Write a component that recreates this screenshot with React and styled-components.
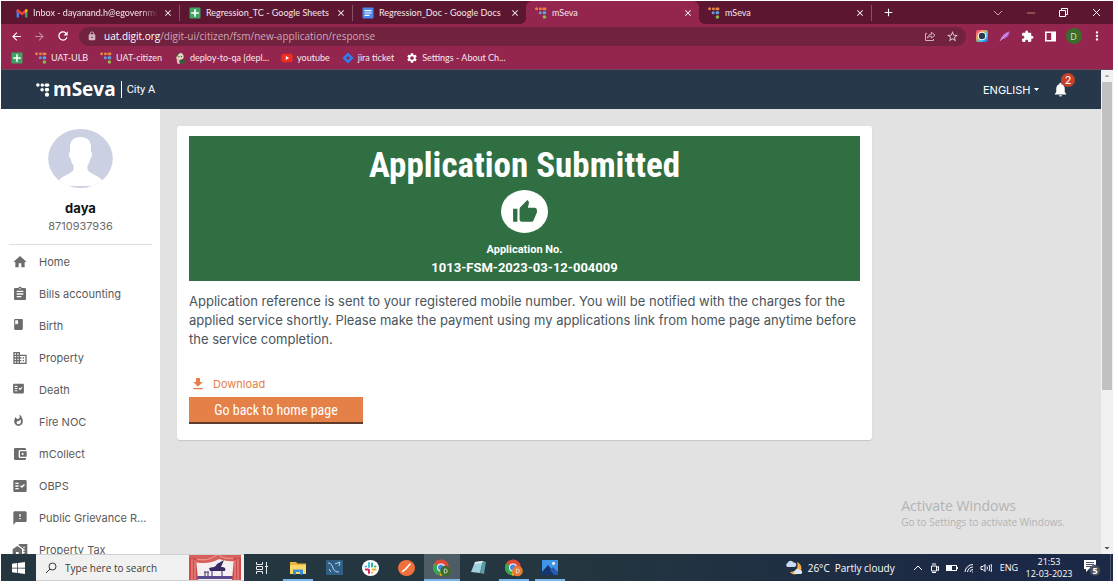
import React from "react";
import styled, { createGlobalStyle, css } from "styled-components";
import {
  MdHome, MdAssignment, MdBook, MdBusiness, MdFactCheck, MdWhatshot,
  MdAccountBalanceWallet, MdFeedback, MdMapsHomeWork, MdThumbUp, MdFileDownload,
  MdNotifications, MdClose, MdAdd, MdArrowBack, MdArrowForward, MdRefresh, MdLock,
  MdStarBorder, MdExtension, MdMoreVert, MdSettings, MdArrowDropDown, MdArrowDropUp,
} from "react-icons/md";

const GlobalStyle = createGlobalStyle`
  *, *::before, *::after { box-sizing: border-box; }
  body { margin: 0; background: #fff; }
  button, input, select { font: inherit; color: inherit; border: 0; padding: 0; margin: 0; background: none; outline: 0; }
  button { cursor: pointer; }
  a { color: inherit; text-decoration: none; }
  svg { display: block; flex: none; }
  h1, p, ul { margin: 0; padding: 0; }
`;

const ui = `"Open Sans", "Noto Sans", sans-serif`;
const chrome = `Lato, "Open Sans", sans-serif`;
const web = `Inter, Roboto, sans-serif`;
const bold = `Roboto, "Liberation Sans", sans-serif`;
const narrow = `"Roboto Condensed", "Liberation Sans Narrow", Roboto, sans-serif`;

const Screen = styled.div`
  display: flex;
  flex-direction: column;
  height: 100vh;
  padding: 1px 5px 3px 1px;
  font-family: ${ui};
`;

/* ---------- browser ---------- */

const TabStrip = styled.div`
  display: flex;
  flex: none;
  height: 23px;
  padding-left: 6px;
  background: #5c1631;
  color: #f3e6ec;
  font: 9px ${chrome};
`;

const Tab = styled.div`
  position: relative;
  display: flex;
  align-items: center;
  flex: 0 1 173px;
  min-width: 0;
  gap: 5px;
  padding: 0 6px 0 9px;
  ${(p) => p.$line && css`border-right: 1px solid #8a5068; border-image: linear-gradient(transparent 20%, #8a5068 20%, #8a5068 84%, transparent 84%) 1;`}
  ${(p) => p.$active && css`
    background: #93254f;
    border-radius: 6px 6px 0 0;
    &::before, &::after {
      content: "";
      position: absolute;
      bottom: 0;
      width: 6px;
      height: 6px;
    }
    &::before { left: -6px; background: radial-gradient(circle at 0 0, transparent 6px, #93254f 6px); }
    &::after { right: -6px; background: radial-gradient(circle at 100% 0, transparent 6px, #93254f 6px); }
  `}
`;

const TabTitle = styled.span`
  flex: 1;
  min-width: 0;
  overflow: hidden;
  white-space: nowrap;
  ${(p) => p.$fade && css`mask-image: linear-gradient(90deg, #000 86%, transparent);`}
`;

const IconButton = styled.button`
  display: grid;
  place-items: center;
  flex: none;
  width: ${(p) => p.$w || 23}px;
`;

const WindowControls = styled.div`
  display: flex;
  margin-left: auto;
`;

const Toolbar = styled.div`
  display: flex;
  align-items: center;
  flex: none;
  height: 24px;
  padding: 0 5px 0 4px;
  background: #93254f;
  color: #fff;
`;

const AddressBar = styled.div`
  display: flex;
  align-items: center;
  flex: 1;
  height: 19px;
  margin: 0 4px 0 5px;
  padding: 0 2px 0 8px;
  border-radius: 10px;
  background: #71223f;
  font-size: 10px;
`;

const Host = styled.label`
  margin-left: 7px;
`;

const PathInput = styled.input`
  flex: 1;
  min-width: 0;
  color: #cda7b5;
`;

const Bookmarks = styled.nav`
  display: flex;
  align-items: center;
  flex: none;
  height: 22px;
  gap: 12px;
  padding: 0 10px 2px;
  border-bottom: 1px solid #6d4560;
  background: #93254f;
  color: #f6e9ee;
  font: 9px ${chrome};
`;

const Bookmark = styled.a`
  display: flex;
  align-items: center;
  gap: 4px;
  white-space: nowrap;
`;

const Avatar = styled.span`
  display: grid;
  place-items: center;
  width: 16px;
  height: 16px;
  border-radius: 50%;
  background: #3c6b2a;
  color: #d5e5cd;
  font-size: 9px;
`;

const Viewport = styled.div`
  display: flex;
  flex: 1;
  min-height: 0;
`;

const Scrollbar = styled.div`
  display: flex;
  flex-direction: column;
  flex: none;
  width: 12px;
  background: #f1f1f1;
  color: #505050;
`;

const ScrollTrack = styled.div`
  flex: 1;
  padding: 0 1px;
`;

const ScrollThumb = styled.div`
  height: 67%;
  background: #c1c1c1;
`;

/* ---------- mSeva page ---------- */

const Page = styled.div`
  display: flex;
  flex-direction: column;
  flex: 1;
  min-width: 0;
  font-family: ${web};
`;

const Header = styled.header`
  display: flex;
  align-items: center;
  flex: none;
  height: 39px;
  padding: 0 32px 0 35px;
  background: #27384a;
  color: #fff;
`;

const Brand = styled.a`
  display: flex;
  align-items: center;
  gap: 3px;
  padding-right: 5px;
  border-right: 1px solid #fff;
  font: 700 19px/17px ${ui};
`;

const City = styled.span`
  margin-left: 5px;
  font: 11px ${bold};
`;

const Language = styled.label`
  display: flex;
  align-items: center;
  gap: 3px;
  margin-left: auto;
  font-size: 11px;
`;

const LanguageSelect = styled.select`
  appearance: none;
`;

const Bell = styled.button`
  position: relative;
  margin-left: 13px;
`;

const Badge = styled.span`
  position: absolute;
  top: -8px;
  right: -6px;
  width: 14px;
  height: 14px;
  border-radius: 50%;
  background: #c8402b;
  font-size: 11px;
  line-height: 14px;
`;

const Body = styled.div`
  display: flex;
  flex: 1;
  min-height: 0;
`;

const Sidebar = styled.aside`
  flex: none;
  width: 159px;
  padding: 20px 8px 0;
  overflow: hidden;
  background: #fff;
`;

const Profile = styled.div`
  display: flex;
  flex-direction: column;
  align-items: center;
  height: 116px;
  border-bottom: 1px solid #dedede;
`;

const UserName = styled.strong`
  margin-top: 11px;
  font-size: 13px;
  line-height: 16px;
  color: #111;
`;

const Phone = styled.span`
  margin-top: 2px;
  font-size: 11px;
  line-height: 16px;
  color: #6b6b6b;
`;

const Menu = styled.nav`
  padding-top: 1px;
`;

const MenuLink = styled.a`
  display: flex;
  align-items: center;
  height: 32px;
  gap: 11px;
  padding-left: 3px;
  color: #5a5a5a;
  font-size: 11px;
  white-space: nowrap;
`;

const MenuIcon = styled.span`
  width: 16px;
  height: 16px;
  color: #6c6c6c;
`;

const Content = styled.main`
  position: relative;
  flex: 1;
  min-width: 0;
  padding: 17px;
  background: #e2e2e2;
`;

const Card = styled.section`
  max-width: 695px;
  padding: 10px 12px 16px;
  border-radius: 3px;
  background: #fff;
  box-shadow: 0 1px 1px #c4c8c8;
`;

const Banner = styled.div`
  display: flex;
  flex-direction: column;
  align-items: center;
  height: 145px;
  padding-top: 12px;
  background: #306f42;
  color: #fff;
  font-family: ${bold};
  font-weight: 700;
`;

const Title = styled.h1`
  font: 700 35px/36px ${narrow};
`;

const Thumb = styled.span`
  display: grid;
  place-items: center;
  width: 47px;
  height: 43px;
  margin: 6px 0 8px;
  border-radius: 50%;
  background: #fff;
  color: #306f42;
`;

const BannerText = styled.span`
  font-size: ${(p) => (p.$large ? 13 : 11)}px;
  line-height: 18px;
`;

const Message = styled.p`
  margin-top: 11px;
  color: #4a555c;
  font-size: 13px;
  line-height: 19px;
`;

const Download = styled.a`
  display: flex;
  align-items: center;
  width: max-content;
  height: 16px;
  gap: 7px;
  margin: 27px 0 5px 1px;
  color: #e58049;
  font-size: 11px;
`;

const HomeButton = styled.button`
  display: block;
  width: 174px;
  height: 27px;
  border-bottom: 2px solid #5f3b2c;
  background: #e58049;
  color: #fff;
  font: 14px ${narrow};
`;

const Watermark = styled.div`
  position: absolute;
  right: 36px;
  bottom: 24px;
  color: #b3b3b3;
  font: 10px/15px ${ui};
`;

const WatermarkTitle = styled.div`
  font-size: 14px;
  line-height: 18px;
`;

/* ---------- desktop taskbar ---------- */

const Taskbar = styled.footer`
  display: flex;
  flex: none;
  height: 27px;
  background: linear-gradient(90deg, #24363f 0%, #24363f 50%, #1b2846 90%);
  color: #fff;
  font-size: 10px;
`;

const SearchBox = styled.label`
  display: flex;
  align-items: center;
  flex: 0 1 208px;
  min-width: 0;
  gap: 8px;
  padding: 0 3px 0 9px;
  border: 1px solid #cfd2d3;
  border-width: 1px 0;
  background: #f1f1f1;
  color: #3b3b3b;
`;

const SearchInput = styled.input`
  flex: 1;
  width: 0;
  min-width: 0;
  &::placeholder { color: #3b3b3b; opacity: 1; }
`;

const TaskButton = styled.button`
  display: grid;
  place-items: center;
  flex: none;
  width: ${(p) => p.$w || 36}px;
  ${(p) => p.$open && css`background: linear-gradient(#78b4ea, #78b4ea) bottom / 30px 2px no-repeat;`}
  ${(p) => p.$active && css`background: linear-gradient(#78b4ea, #78b4ea) bottom / 100% 2px no-repeat, #4e5d65;`}
`;

const Tray = styled.div`
  display: flex;
  align-items: center;
  flex: none;
  margin-left: auto;
  padding-right: 2px;
  white-space: nowrap;
`;

const Weather = styled.button`
  display: flex;
  align-items: center;
  gap: 5px;
  margin-right: 15px;
`;

const TrayIcon = styled.button`
  display: grid;
  place-items: center;
  width: 17px;
`;

const InputLanguage = styled.button`
  margin-left: 5px;
  font-size: 9px;
`;

const Clock = styled.time`
  width: 48px;
  margin-left: 7px;
  text-align: center;
  font-size: 9px;
  line-height: 12px;
`;

const Notices = styled.button`
  display: grid;
  place-items: center;
  width: 38px;
  height: 27px;
  border-right: 1px solid #4a556c;
`;

/* ---------- drawings ---------- */

const DigitMark = ({ size = 12, mono }) => (
  <svg width={size} height={size} viewBox="0 0 12 12">
    <g fill={mono || "#e58442"}>
      <circle cx="1.6" cy="1.8" r="1.5" />
      <rect x="4" y="0.4" width="2.8" height="2.8" rx="1.2" />
      <rect x="7.4" y="0.4" width="4" height="2.8" rx="1.2" />
    </g>
    <g fill={mono || "#5aa0dc"}>
      <circle cx="5.2" cy="5.7" r="1.5" />
      <rect x="7.6" y="4.2" width="3.6" height="3" rx="1.2" />
    </g>
    <circle cx="9.4" cy="10" r="1.8" fill={mono || "#8bbb4a"} />
  </svg>
);

const Gmail = () => (
  <svg width="12" height="12" viewBox="0 0 12 12">
    <path d="M0.6 2.6v8h2.4V5z" fill="#4285f4" />
    <path d="M11.4 2.6v8H9V5z" fill="#34a853" />
    <path d="M0.6 2.8 2 2l4 3.2L10 2l1.4.8v1.8L6 8.4.6 4.6z" fill="#ea4335" />
    <path d="M9 3l1-1 1.4.8v1.8L9 6.2z" fill="#fbbc04" />
  </svg>
);

const Sheets = () => (
  <svg width="12" height="12" viewBox="0 0 12 12">
    <rect x="0.5" y="0.5" width="11" height="11" rx="1" fill="#3fa463" />
    <path d="M5.2 2.2h1.6v3h3v1.6h-3v3H5.2v-3h-3V5.2h3z" fill="#fff" />
  </svg>
);

const Docs = () => (
  <svg width="12" height="12" viewBox="0 0 12 12">
    <rect x="0.5" y="0.5" width="11" height="11" rx="1" fill="#4a87ee" />
    <path d="M2.5 3h7v1.2h-7zM2.5 5.4h7v1.2h-7zM2.5 7.8h5V9h-5z" fill="#fff" />
  </svg>
);

const Jenkins = () => (
  <svg width="12" height="12" viewBox="0 0 12 12">
    <path d="M2 4.5C2 1.8 4 .6 6 .8s4 1.8 3.6 4.6L8.8 8 5 9.4 2.6 7z" fill="#e6d3b8" />
    <path d="M2 4.5C1.6 1.6 4 .2 6.6.7 4.8 1.8 3.2 2.6 3.2 5z" fill="#4a3a35" />
    <path d="M5 8.6 9.6 6.6l1.8 3.4-1.2 1.8H6z" fill="#3e5a3a" />
    <path d="M2.5 7.6 5.4 9.6 6 11.8H3.6z" fill="#d9d2c8" />
    <circle cx="5" cy="4.6" r="0.6" fill="#333" />
    <circle cx="7.4" cy="4.6" r="0.6" fill="#333" />
  </svg>
);

const Youtube = () => (
  <svg width="12" height="12" viewBox="0 0 12 12">
    <rect x="0.3" y="1.8" width="11.4" height="8.4" rx="2.4" fill="#ee2c20" />
    <path d="M4.8 4v4L8.2 6z" fill="#fff" />
  </svg>
);

const Jira = () => (
  <svg width="12" height="12" viewBox="0 0 12 12">
    <path d="M6 .4 11.6 6 6 11.6.4 6z" fill="#2d7ff0" />
    <path d="M6 4 8 6 6 8 4 6z" fill="#93254f" />
  </svg>
);

const Line = ({ d, w = 10, h = 10, stroke = "#fff", sw = 1 }) => (
  <svg width={w} height={h} viewBox={`0 0 ${w} ${h}`} fill="none" stroke={stroke} strokeWidth={sw}>
    <path d={d} />
  </svg>
);

const ShareIcon = () => (
  <Line w={12} h={12} stroke="#d3afbd" d="M3 3.5H1.5v7h8V9M3.5 8C3.8 5.6 5.4 4.4 7.4 4.4V2.2L11 5.2 7.4 8V6.2C5.8 6.2 4.6 6.8 3.5 8z" />
);

const ColorExt = () => (
  <svg width="12" height="12" viewBox="0 0 12 12">
    <defs>
      <linearGradient id="ext" x1="0" y1="0" x2="1" y2="1">
        <stop offset="0" stopColor="#e8408e" />
        <stop offset="0.35" stopColor="#f2a04a" />
        <stop offset="0.65" stopColor="#35c8e8" />
        <stop offset="1" stopColor="#3d55e8" />
      </linearGradient>
    </defs>
    <rect width="12" height="12" rx="2" fill="url(#ext)" />
    <circle cx="6" cy="6" r="4.3" fill="#fff" />
    <circle cx="6" cy="6" r="3.2" fill="#2c3a4a" />
  </svg>
);

const Feather = () => (
  <svg width="12" height="12" viewBox="0 0 12 12">
    <path d="M1 10.8C2 6.4 5 2.6 10.6 1.2 10.4 5 8 8.4 3.4 9.2z" fill="#b76ad0" />
    <path d="M1 10.8 8.6 3.2" stroke="#e9c9f4" strokeWidth="0.8" />
  </svg>
);

const SidePanel = () => (
  <svg width="11" height="11" viewBox="0 0 11 11">
    <path d="M0 .5h11v10H0zM1.6 2v7h4.6V2z" fill="#fff" fillRule="evenodd" />
  </svg>
);

const UserPicture = () => (
  <svg width="66" height="60" viewBox="0 0 66 60">
    <defs>
      <clipPath id="face"><ellipse cx="32.500" cy="29.5" rx="32.3" ry="29.5" /></clipPath>
    </defs>
    <g clipPath="url(#face)">
      <rect width="66" height="60" fill="#cbd0e2" />
      <path d="M32.500 8c7 0 10.500 4 10.500 10v5c1.500 0 1.500 5-.5 6.500-.8 3.500-1.800 5.500-3 7V41c1.500 3 9 5 13.500 9L59.500 57H5.500L12 50c4.500-4 12-6 13.500-9v-4.500c-1.200-1.500-2.200-3.500-3-7-2-1.500-2-6.500-.5-6.500v-5c0-6 3.500-10 10.500-10z" fill="#fff" />
    </g>
  </svg>
);

const StartLogo = () => (
  <svg width="13" height="12" viewBox="0 0 13 12">
    <path d="M0 1.700 5.300 1v4.700H0zM6 .9 13 0v5.700H6zM0 6.400h5.300V11L0 10.300zM6 6.400h7V12l-7-.9z" fill="#fff" />
  </svg>
);

const Stage = () => (
  <svg width="52" height="25" viewBox="0 0 52 25">
    <rect width="52" height="25" fill="#f6eff2" />
    <rect x="8" y="21" width="36" height="3" fill="#5a4a8e" />
    <path d="M20 13c3-1 6 0 8-4l7-4-3 7c4 0 5 1 4 4H21z" fill="#362a63" />
    <path d="M23 15v6M33 15v6M15 17h5M16 17v4M19 17v4" stroke="#362a63" />
    <path d="M0 0h52v4c-8 4-16 2-22 0-8 5-18 5-30 2z" fill="#d8605c" />
    <path d="M8 4c8 2 14 0 20-4M44 3C38 4 34 3 30 0" stroke="#f0a09a" fill="none" />
    <path d="M0 3h7l2 22H0zM45 3h7v22h-9z" fill="#cf4c4a" />
    <path d="M3 4v21M6 5v20M46 5v20M49 4v21" stroke="#ec9a94" />
  </svg>
);

const TaskView = () => (
  <Line w={14} h={12} stroke="#e4e8ea" d="M1.500 0v2.500h6V0M1.500 12V9.500h6V12M1.500 4.500h6v3h-6zM11.500 0v12M10 4.500h3" />
);

const Folder = () => (
  <svg width="18" height="14" viewBox="0 0 18 14">
    <path d="M1 1h6l1.500 1.500H17V13H1z" fill="#e9b33c" />
    <path d="M1 4h16v9H1z" fill="#fbd866" />
    <path d="M4 13.500V8.500h10v5h-3v-2.500H7v2.500z" fill="#3f8fd8" />
  </svg>
);

const Workbench = () => (
  <svg width="17" height="15" viewBox="0 0 17 15">
    <rect width="17" height="15" rx="1" fill="#2f5f86" />
    <path d="M2 3c3 0 4 2 5 5s3 4 6 4M9 4l5-2-1 4M3 9l2 3" stroke="#b9d3e5" fill="none" />
  </svg>
);

const Slack = () => (
  <svg width="17" height="16" viewBox="0 0 17 16">
    <ellipse cx="8.500" cy="8" rx="8.500" ry="8" fill="#fff" />
    <g strokeWidth="2" strokeLinecap="round">
      <path d="M7 3v4M3.500 6.500H4" stroke="#36c5f0" />
      <path d="M10 3.500v3M13 6.500h.5" stroke="#2eb67d" />
      <path d="M10.500 9.500h3M10 12.500v.3" stroke="#ecb22e" />
      <path d="M3.800 9.500H6M7 10v3" stroke="#e01e5a" />
    </g>
  </svg>
);

const Postman = () => (
  <svg width="17" height="16" viewBox="0 0 17 16">
    <ellipse cx="8.500" cy="8" rx="8.500" ry="8" fill="#f0703c" />
    <path d="M4.500 11.500 8 8.600 12 4" stroke="#fff" strokeWidth="1.600" fill="none" strokeLinecap="round" />
  </svg>
);

const Chrome = ({ badge }) => (
  <svg width="20" height="18" viewBox="0 0 20 18">
    <circle cx="9" cy="8.500" r="8" fill="#e04a3a" />
    <path d="M9 8.500 2 4.500A8 8 0 0 0 8.500 16.500z" fill="#34a853" />
    <path d="M9 8.500h8A8 8 0 0 1 8 16.500z" fill="#fbc116" />
    <circle cx="9" cy="8.500" r="4" fill="#fff" />
    <circle cx="9" cy="8.500" r="3" fill="#4a86e8" />
    <circle cx="13.500" cy="12" r="5.300" fill={badge} />
    <path d="M12.300 10v4h1a2 2 0 0 0 0-4z" stroke="#e8efe4" strokeWidth="0.800" fill="none" />
  </svg>
);

const Notepad = () => (
  <svg width="17" height="15" viewBox="0 0 17 15">
    <path d="M5 2 13 1l-3 12-9-1z" fill="#9fd0dc" />
    <path d="M5 2 13 1l-.5 2-8 .8z" fill="#e4eef0" />
    <path d="M13 1l3 1-2 12-4-1z" fill="#5c9aaa" />
  </svg>
);

const Photos = () => (
  <svg width="16" height="15" viewBox="0 0 16 15">
    <rect width="16" height="15" fill="#3f96e8" />
    <path d="M0 12 6 5l8 10H0z" fill="#16346e" />
    <path d="M8 10l3-3 5 5v3h-4z" fill="#245cae" />
    <circle cx="11.500" cy="3.500" r="1.400" fill="#fff" />
  </svg>
);

const WeatherIcon = () => (
  <svg width="18" height="16" viewBox="0 0 18 16">
    <path d="M12 2c5 2 6 8 2 11-3 2-7 2-9-1 6 0 9-4 7-10z" fill="#f3b14c" />
    <path d="M2.500 7a2.200 2.200 0 0 1 0-4A3.300 3.300 0 0 1 8.500 2.500 2.300 2.300 0 0 1 9.500 7z" fill="#c9daf4" />
    <path d="M10 14a2 2 0 0 1 0-3.500 3 3 0 0 1 5-.5 2.100 2.100 0 0 1 1 4z" fill="#dce7f8" />
  </svg>
);

const NoticeIcon = () => (
  <svg width="18" height="18" viewBox="0 0 18 18">
    <path d="M1 1h12v9H6l-3 3v-3H1z" fill="#fff" />
    <path d="M3 3.500h8M3 5.500h8M3 7.500h5" stroke="#1b2846" strokeWidth="0.800" />
    <circle cx="12" cy="11.500" r="5.500" fill="#4b515c" stroke="#1b2846" strokeWidth="0.500" />
    <text x="12" y="15" textAnchor="middle" fontSize="9" fontWeight="700" fill="#fff">5</text>
  </svg>
);

const tabs = [
  { icon: <Gmail />, title: "Inbox - dayanand.h@egovernme", fade: true, line: true },
  { icon: <Sheets />, title: "Regression_TC - Google Sheets", line: true },
  { icon: <Docs />, title: "Regression_Doc - Google Docs" },
  { icon: <DigitMark />, title: "mSeva", active: true },
  { icon: <DigitMark />, title: "mSeva", line: true },
];

const bookmarks = [
  { icon: <Sheets /> },
  { icon: <DigitMark />, label: "UAT-ULB" },
  { icon: <DigitMark />, label: "UAT-citizen" },
  { icon: <Jenkins />, label: "deploy-to-qa [depl..." },
  { icon: <Youtube />, label: "youtube" },
  { icon: <Jira />, label: "jira ticket" },
  { icon: <MdSettings size={12} color="#fff" />, label: "Settings - About Ch..." },
];

const menu = [
  [MdHome, "Home"],
  [MdAssignment, "Bills accounting"],
  [MdBook, "Birth", 13],
  [MdBusiness, "Property"],
  [MdFactCheck, "Death", 13],
  [MdWhatshot, "Fire NOC", 13],
  [MdAccountBalanceWallet, "mCollect"],
  [MdFactCheck, "OBPS"],
  [MdFeedback, "Public Grievance R..."],
  [MdMapsHomeWork, "Property Tax"],
];

const apps = [
  { name: "Task view", icon: <TaskView /> },
  { name: "File Explorer", icon: <Folder />, open: true },
  { name: "Workbench", icon: <Workbench /> },
  { name: "Slack", icon: <Slack /> },
  { name: "Postman", icon: <Postman /> },
  { name: "Chrome", icon: <Chrome badge="#3c6b2a" />, active: true },
  { name: "Notepad", icon: <Notepad /> },
  { name: "Chrome second profile", icon: <Chrome badge="#e67a35" />, open: true },
  { name: "Photos", icon: <Photos />, open: true },
];

export default function App() {
  return (
    <Screen>
      <GlobalStyle />
      <TabStrip>
        {tabs.map((t, i) => (
          <Tab key={i} $active={t.active} $line={t.line}>
            {t.icon}
            <TabTitle $fade={t.fade}>{t.title}</TabTitle>
            <IconButton $w={10} aria-label="Close tab"><MdClose size={10} color="#fff" /></IconButton>
          </Tab>
        ))}
        <IconButton $w={33} aria-label="New tab"><MdAdd size={13} color="#fff" /></IconButton>
        <WindowControls>
          <IconButton $w={33} aria-label="Search tabs"><Line h={6} stroke="#c9a3b2" d="M1 1l4 4 4-4" /></IconButton>
          <IconButton $w={33} aria-label="Minimise"><Line h={2} stroke="#b98a6a" d="M1 1h8" /></IconButton>
          <IconButton $w={33} aria-label="Restore"><Line w={9} h={9} d="M.5 2.500h6v6h-6zM2.500 2.500v-2h6v6h-2" /></IconButton>
          <IconButton $w={33} aria-label="Close window"><Line w={9} h={9} d="M1 1l7 7M8 1 1 8" /></IconButton>
        </WindowControls>
      </TabStrip>

      <Toolbar>
        <IconButton aria-label="Back"><MdArrowBack size={13} /></IconButton>
        <IconButton aria-label="Forward"><MdArrowForward size={13} color="#c4889e" /></IconButton>
        <IconButton aria-label="Reload"><MdRefresh size={14} /></IconButton>
        <AddressBar>
          <MdLock size={10} color="#d3b5c0" />
          <Host htmlFor="path">uat.digit.org</Host>
          <PathInput id="path" defaultValue="/digit-ui/citizen/fsm/new-application/response" />
          <IconButton aria-label="Share"><ShareIcon /></IconButton>
          <IconButton aria-label="Bookmark page"><MdStarBorder size={13} color="#e3c8d2" /></IconButton>
        </AddressBar>
        <IconButton aria-label="Colour extension"><ColorExt /></IconButton>
        <IconButton aria-label="Feather extension"><Feather /></IconButton>
        <IconButton aria-label="Extensions"><MdExtension size={13} /></IconButton>
        <IconButton aria-label="Side panel"><SidePanel /></IconButton>
        <IconButton aria-label="Profile"><Avatar>D</Avatar></IconButton>
        <IconButton aria-label="Menu"><MdMoreVert size={14} /></IconButton>
      </Toolbar>

      <Bookmarks>
        {bookmarks.map((b, i) => (
          <Bookmark key={i} href="#" aria-label={b.label || "Sheets"}>{b.icon}{b.label}</Bookmark>
        ))}
      </Bookmarks>

      <Viewport>
        <Page>
          <Header>
            <Brand href="#"><DigitMark size={14} mono="#fff" />mSeva</Brand>
            <City>City A</City>
            <Language>
              <LanguageSelect aria-label="Language"><option>ENGLISH</option></LanguageSelect>
              <svg width="5" height="3" viewBox="0 0 5 3"><path d="M0 0h5L2.500 3z" fill="#fff" /></svg>
            </Language>
            <Bell aria-label="Notifications">
              <MdNotifications size={17} />
              <Badge>2</Badge>
            </Bell>
          </Header>
          <Body>
            <Sidebar>
              <Profile>
                <UserPicture />
                <UserName>daya</UserName>
                <Phone>8710937936</Phone>
              </Profile>
              <Menu>
                {menu.map(([Icon, label, size = 16]) => (
                  <MenuLink key={label} href="#"><MenuIcon><Icon size={size} /></MenuIcon>{label}</MenuLink>
                ))}
              </Menu>
            </Sidebar>
            <Content>
              <Card>
                <Banner>
                  <Title>Application Submitted</Title>
                  <Thumb><MdThumbUp size={26} /></Thumb>
                  <BannerText>Application No.</BannerText>
                  <BannerText $large>1013-FSM-2023-03-12-004009</BannerText>
                </Banner>
                <Message>
                  Application reference is sent to your registered mobile number. You will be notified with the charges for the applied service shortly. Please make the payment using my applications link from home page anytime before the service completion.
                </Message>
                <Download href="#"><MdFileDownload size={16} />Download</Download>
                <HomeButton>Go back to home page</HomeButton>
              </Card>
              <Watermark>
                <WatermarkTitle>Activate Windows</WatermarkTitle>
                Go to Settings to activate Windows.
              </Watermark>
            </Content>
          </Body>
        </Page>
        <Scrollbar>
          <MdArrowDropUp size={12} color="#a3a3a3" />
          <ScrollTrack><ScrollThumb /></ScrollTrack>
          <MdArrowDropDown size={12} />
        </Scrollbar>
      </Viewport>

      <Taskbar>
        <TaskButton $w={35} aria-label="Start"><StartLogo /></TaskButton>
        <SearchBox>
          <Line w={12} h={12} stroke="#333" d="M7.500 1a3.500 3.500 0 1 1 0 7 3.500 3.500 0 1 1 0-7zM5 7 1 11" />
          <SearchInput aria-label="Search" placeholder="Type here to search" />
          <Stage />
        </SearchBox>
        {apps.map((a) => (
          <TaskButton key={a.name} aria-label={a.name} $open={a.open} $active={a.active}>{a.icon}</TaskButton>
        ))}
        <Tray>
          <Weather><WeatherIcon /><span>26°C</span><span>Partly cloudy</span></Weather>
          <TrayIcon aria-label="Hidden icons"><Line h={6} d="M1 5l4-4 4 4" /></TrayIcon>
          <TrayIcon aria-label="Meet now"><Line d="M1.500 3h5v5h-5zM6.500 4.500l2-1v4l-2-1M2 1h4M2 9.500h4" /></TrayIcon>
          <TrayIcon aria-label="Battery"><svg width="12" height="6" viewBox="0 0 12 6"><path d="M0 0h11v6H0z" fill="#fff" /><path d="M6 1h4v4H6z" fill="#1b2846" /><path d="M11 2h1v2h-1z" fill="#fff" /></svg></TrayIcon>
          <TrayIcon aria-label="Network"><Line d="M1 9A8 8 0 0 1 9 1.500M3.500 9A5.500 5.500 0 0 1 9 4M6 9a3 3 0 0 1 3-2.500M8 9h1" /></TrayIcon>
          <TrayIcon aria-label="Volume"><Line w={12} d="M1 3.500h2l2-2v7l-2-2H1zM7 3.500q1 1.500 0 3M9 2q2 3 0 6M11 1q2 4 0 8" /></TrayIcon>
          <InputLanguage>ENG</InputLanguage>
          <Clock>21:53<br />12-03-2023</Clock>
          <Notices aria-label="Notifications"><NoticeIcon /></Notices>
        </Tray>
      </Taskbar>
    </Screen>
  );
}
